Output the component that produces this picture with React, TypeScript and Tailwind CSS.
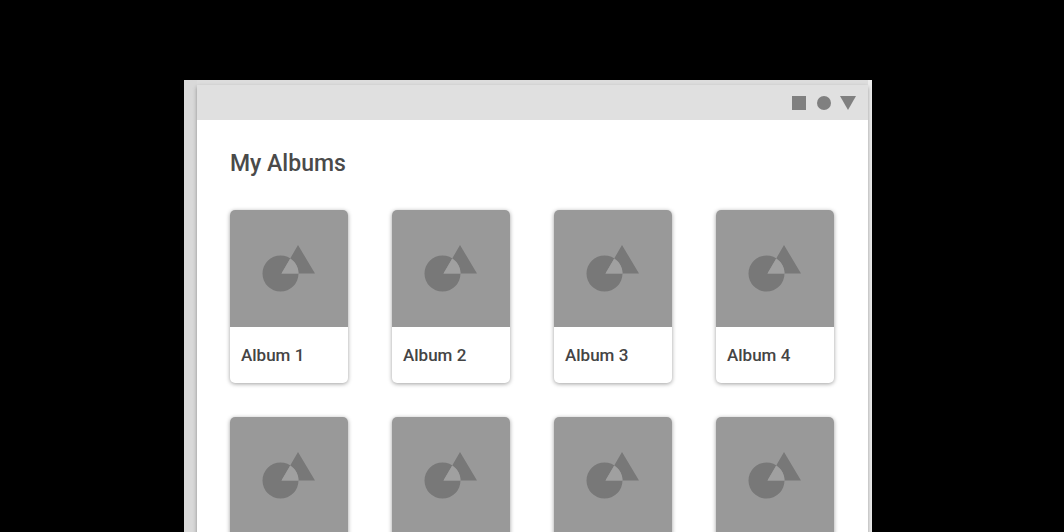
const albums = ['Album 1', 'Album 2', 'Album 3', 'Album 4', 'Album 5', 'Album 6', 'Album 7', 'Album 8'];

function AlbumArt() {
  return (
    <div className="flex h-[117px] items-center justify-center bg-[#999999]">
      <svg className="h-12 w-[54px]" viewBox="0 0 54 48" aria-hidden="true">
        <path
          fill="#787878"
          fillRule="evenodd"
          d="M36 0 L53 28.5 H19.5 Z M0.5 28.5 a18 18 0 1 0 36 0 a18 18 0 1 0 -36 0 Z"
        />
        <path fill="#a0a0a0" d="M19.5 28.5 L28.2 13.7 A18 18 0 0 1 36.5 28.5 Z" />
      </svg>
    </div>
  );
}

function AlbumCard({ title }: { title: string }) {
  return (
    <li className="overflow-hidden rounded-[5px] bg-white shadow-[0_1px_4px_rgba(0,0,0,0.38)]">
      <AlbumArt />
      <h2 className="px-[11px] py-4 text-[17px] leading-6 font-medium text-[#444444]">{title}</h2>
    </li>
  );
}

function StatusBar() {
  return (
    <div className="flex h-[35px] items-center justify-end bg-[#e0e0e0] pr-3">
      <svg className="h-4 w-16" viewBox="0 0 64 16" fill="#808080" aria-hidden="true">
        <rect x="0" y="1" width="14" height="14" />
        <circle cx="32" cy="8" r="7" />
        <path d="M48 1 H64 L56 15 Z" />
      </svg>
    </div>
  );
}

export default function App() {
  return (
    <div className="h-screen overflow-hidden bg-black pt-20 pr-48 pl-[184px] font-['Roboto',sans-serif]">
      <div className="min-h-full bg-linear-to-r from-[#d9d9d9] from-50% to-[#ececec] to-50% pr-1 pl-[13px]">
        <div className="h-[5px] bg-[#dddddd]" />
        <main className="min-h-screen bg-white shadow-[0_2px_4px_rgba(0,0,0,0.35)]">
          <StatusBar />
          <div className="pt-[30px] pr-[34px] pl-[33px]">
            <h1 className="text-[23px] leading-7 font-medium text-[#4a4a4a]">My Albums</h1>
            <ul className="mt-8 grid grid-cols-4 gap-x-11 gap-y-[34px]">
              {albums.map((title) => (
                <AlbumCard key={title} title={title} />
              ))}
            </ul>
          </div>
        </main>
      </div>
    </div>
  );
}
